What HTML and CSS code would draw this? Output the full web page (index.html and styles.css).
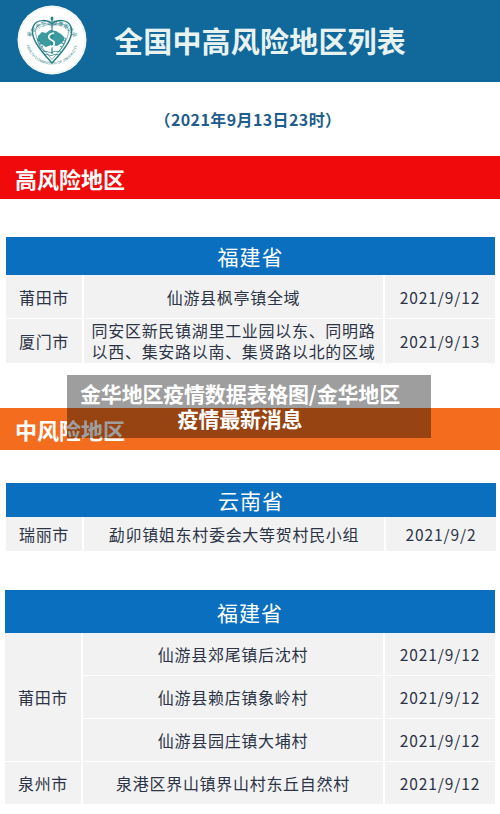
FILE: index.html
```html
<!DOCTYPE html>
<html lang="zh-CN">
<head>
<meta charset="utf-8">
<title>全国中高风险地区列表</title>
<link rel="stylesheet" href="styles.css">
</head>
<body>
<div class="page">
  <header class="top">
    <svg class="logo" viewBox="0 0 70 70" width="70" height="70" aria-hidden="true">
      <defs>
        <path id="arcTop" d="M 10 40 A 25.5 25.5 0 0 1 60 40"/>
        <path id="arcBot" d="M 8.5 33 A 26.5 26.5 0 0 0 61.5 33"/>
      </defs>
      <circle cx="35" cy="35" r="34.5" fill="#ffffff"/>
      <circle cx="35" cy="35" r="33.2" fill="none" stroke="#d6e8e9" stroke-width="0.6"/>
      <text class="lg-cn"><textPath href="#arcTop" startOffset="50%" text-anchor="middle">金华市卫生健康委员会</textPath></text>
      <text class="lg-en"><textPath href="#arcBot" startOffset="50%" text-anchor="middle">HEALTH COMMISSION OF JINHUA CITY</textPath></text>
      <path d="M35 19 C30 14 19 14 16 22 C13 31 20 42 35 58 C50 42 57 31 54 22 C51 14 40 14 35 19 Z" fill="none" stroke="#2a8087" stroke-width="1.5"/>
      <path d="M35 21.5 C31 17.5 21 17.5 19 23.5 C17 31 23 41 35 54.5 C47 41 53 31 51 23.5 C49 17.5 39 17.5 35 21.5 Z" fill="none" stroke="#2a8087" stroke-width="0.6"/>
      <path d="M21 31 L25 27 L29 28 L33 25 L39 26 L44 29 L48 33 L45 38 L40 41 L34 40 L29 42 L24 39 L21 35 Z" fill="#3b9a9e"/>
      <line x1="35" y1="13" x2="35" y2="49" stroke="#2a8087" stroke-width="1.2"/>
      <ellipse cx="35" cy="13.5" rx="1.4" ry="2" fill="#2a8087"/>
      <path d="M32 43 C38 41 39 37 34.5 35 C30 33 31 29 37 28" fill="none" stroke="#ffffff" stroke-width="1.5"/>
      <path d="M20 33 C21 39 24 44 28 47 M49 33 C48 39 45 44 41 47" fill="none" stroke="#2a8087" stroke-width="0.8"/>
      <path d="M21 36 L23 35 M22 39 L24.5 38 M24 42 L26 41 M48 36 L46 35 M47 39 L44.5 38 M45 42 L43 41" stroke="#2a8087" stroke-width="0.8"/>
      <path d="M26 47 C30 45 33 49 36 47 C39 45 42 48 44 46 M27 50 C31 48 33 52 36 50 C39 48 41 51 43 49" fill="none" stroke="#2a8087" stroke-width="0.8"/>
    </svg>
    <h1 class="title">全国中高风险地区列表</h1>
  </header>

  <div class="date">（2021年9月13日23时）</div>

  <div class="band band-red">高风险地区</div>

  <section class="tbl tbl-a">
    <div class="th">福建省</div>
    <div class="td city">莆田市</div>
    <div class="td place">仙游县枫亭镇全域</div>
    <div class="td day">2021/9/12</div>
    <div class="td city">厦门市</div>
    <div class="td place two">同安区新民镇湖里工业园以东、同明路<br>以西、集安路以南、集贤路以北的区域</div>
    <div class="td day">2021/9/13</div>
  </section>

  <div class="band band-orange">中风险地区</div>

  <section class="tbl tbl-b">
    <div class="th">云南省</div>
    <div class="td city">瑞丽市</div>
    <div class="td place">勐卯镇姐东村委会大等贺村民小组</div>
    <div class="td day">2021/9/2</div>
  </section>

  <section class="tbl tbl-c">
    <div class="th">福建省</div>
    <div class="td city span3">莆田市</div>
    <div class="td place">仙游县郊尾镇后沈村</div>
    <div class="td day">2021/9/12</div>
    <div class="td place">仙游县赖店镇象岭村</div>
    <div class="td day">2021/9/12</div>
    <div class="td place">仙游县园庄镇大埔村</div>
    <div class="td day">2021/9/12</div>
    <div class="td city">泉州市</div>
    <div class="td place">泉港区界山镇界山村东丘自然村</div>
    <div class="td day">2021/9/12</div>
  </section>

  <div class="caption">金华地区疫情数据表格图/金华地区<br>疫情最新消息</div>
</div>
</body>
</html>
```

FILE: styles.css
```css
* { box-sizing: border-box; }
html, body { margin: 0; padding: 0; background: #ffffff; }
body {
  font-family: "Noto Sans CJK SC", "Noto Sans", sans-serif;
  width: 500px;
  height: 814px;
  overflow: hidden;
}
.page { position: relative; width: 500px; }

.top {
  height: 82px;
  background: #10689b;
  display: flex;
  align-items: center;
  padding-left: 17px;
}
.logo { display: block; margin-top: -2px; }
.lg-cn { font-size: 5.4px; fill: #2a8087; font-family: "Noto Sans CJK SC", sans-serif; }
.lg-en { font-size: 3.6px; fill: #2a8087; font-family: "Liberation Sans", sans-serif; }
.title {
  margin: 0 0 2px 27px;
  font-size: 29px;
  font-weight: 700;
  color: #e8f3f1;
  letter-spacing: 0.2px;
  line-height: 1;
}

.date {
  height: 74px;
  display: flex;
  align-items: center;
  justify-content: center;
  padding-right: 4px;
  font-size: 16px;
  font-weight: 700;
  color: #1f5d8c;
  letter-spacing: 0.4px;
}

.band {
  display: flex;
  align-items: center;
  padding-left: 15px;
  font-size: 22px;
  font-weight: 700;
  color: #ffffff;
}
.band-red { height: 43px; background: #f00a0b; }
.band-orange { height: 42px; background: #f46c1d; margin-top: 45px; }

.tbl {
  display: grid;
  grid-template-columns: 76px 1fr 110px;
  column-gap: 2px;
  row-gap: 1px;
  background: #ffffff;
}
.tbl-a { margin: 38px 5px 0 6px; }
.tbl-b { margin: 33px 4px 0 6px; }
.tbl-c { margin: 39px 5px 0 5px; }

.th {
  grid-column: 1 / 4;
  background: #0b6fbf;
  color: #ffffff;
  font-size: 21px;
  display: flex;
  align-items: center;
  justify-content: center;
  letter-spacing: 1px;
  margin-bottom: -1px;
}
.tbl-a .th { height: 38px; }
.tbl-b .th { height: 34px; }
.tbl-c .th { height: 43px; }

.td {
  background: #f2f2f2;
  color: #2c3447;
  display: flex;
  align-items: center;
  justify-content: center;
  text-align: center;
  font-size: 16px;
  letter-spacing: 0.7px;
}
.day { font-size: 15.5px; letter-spacing: 0.9px; }
.tbl-a .td { height: 43px; }
.tbl-a .two, .tbl-a .two ~ .td, .tbl-a .city:nth-of-type(5) { height: 44px; }
.two { line-height: 21.5px; padding: 0 6px; }
.tbl-b .td { height: 34px; }
.tbl-c .td { height: 42px; }
.tbl-c .span3 { grid-row: span 3; height: auto; }

.caption {
  position: absolute;
  left: 67px;
  top: 375px;
  width: 364px;
  height: 63px;
  background: rgba(0, 0, 0, 0.38);
  color: #ffffff;
  font-size: 21px;
  font-weight: 700;
  line-height: 25px;
  text-align: center;
  padding: 6px 18px 0 0;
  letter-spacing: -0.2px;
}
```
